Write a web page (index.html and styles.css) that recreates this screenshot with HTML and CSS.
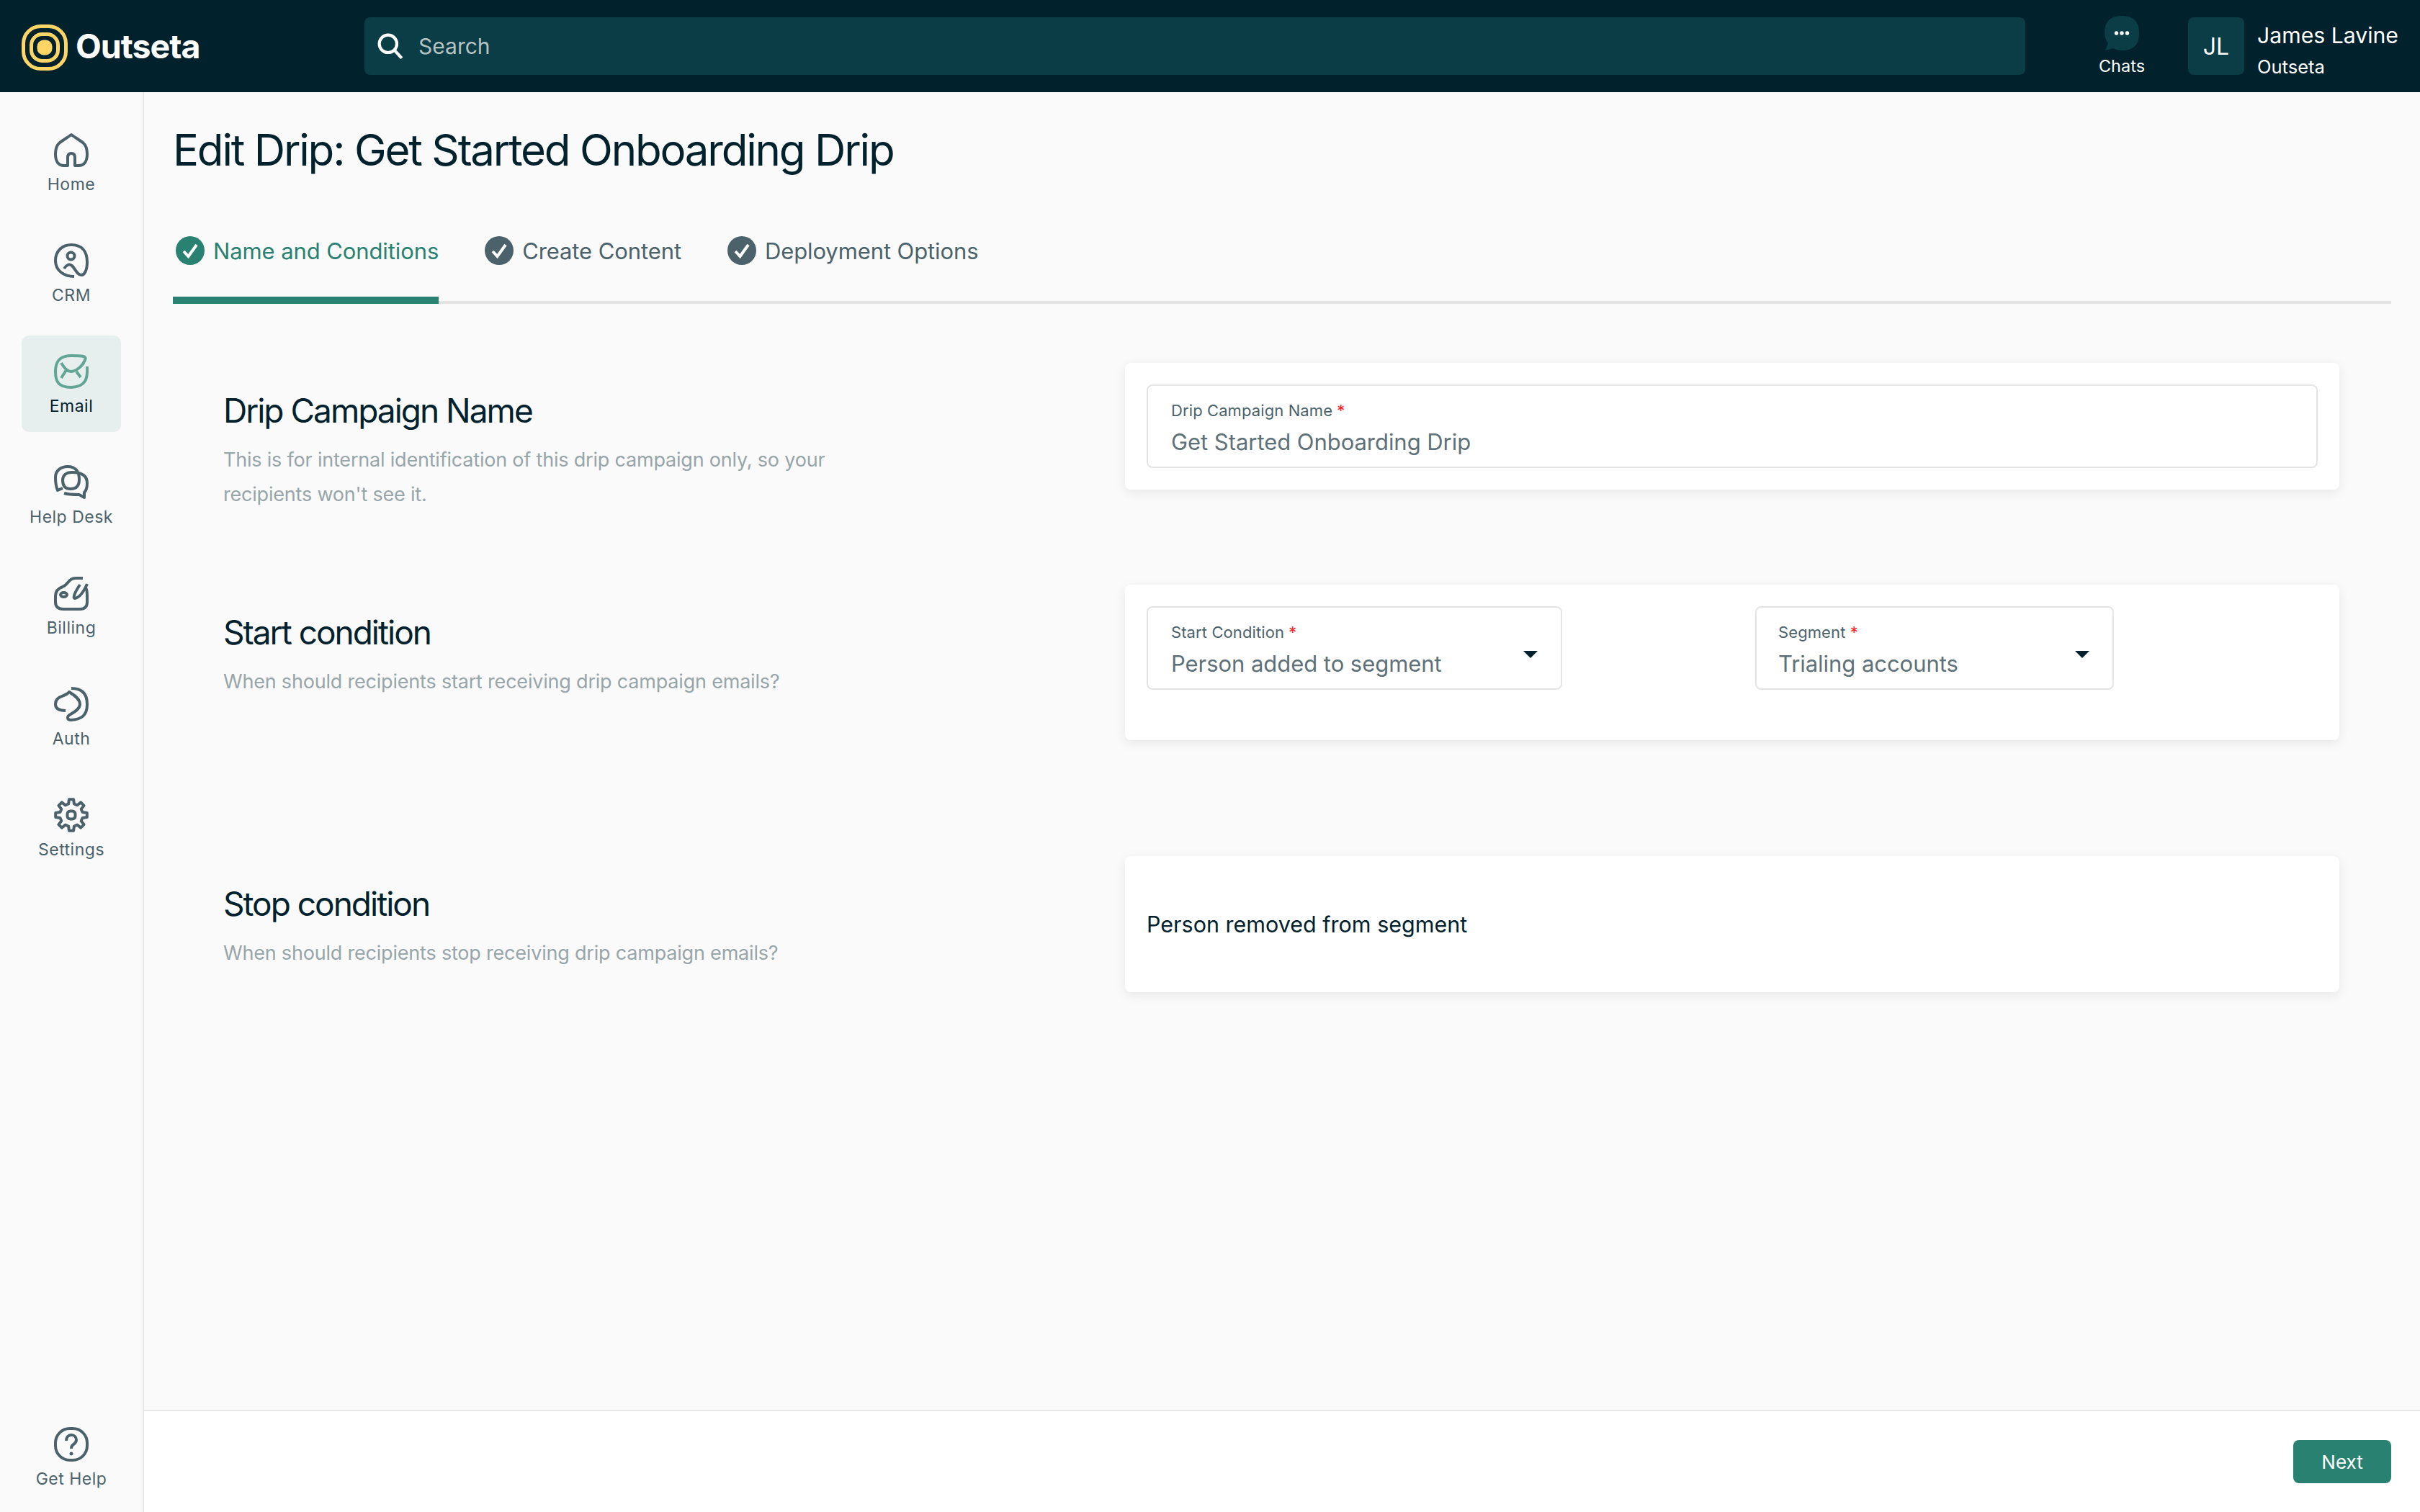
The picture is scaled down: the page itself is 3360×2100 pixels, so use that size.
FILE: index.html
```html
<!DOCTYPE html>
<html lang="en">
  <head>
    <meta charset="utf-8" />
    <title>Edit Drip: Get Started Onboarding Drip</title>
    <link rel="stylesheet" href="styles.css">
  </head>

  <body>
    <header class="topbar">
      <div class="brand">
        <svg class="brand-mark" viewBox="0 0 64 64">
          <rect class="ring-outer" x="2.5" y="2.5" width="59" height="59" rx="24" />
          <rect class="ring-inner" x="13.5" y="13.5" width="37" height="37" rx="15" />
          <rect class="ring-core" x="21.5" y="21.5" width="21" height="21" rx="9" />
        </svg>
        <span class="brand-name">Outseta</span>
      </div>
      <div class="search">
        <svg class="search-icon" viewBox="0 0 34 34">
          <circle cx="14" cy="14" r="11.5" />
          <path d="M22.5 22.5 L32 33" />
        </svg>
        <span class="search-text">Search</span>
      </div>
      <div class="chats">
        <svg class="chats-icon" viewBox="0 0 48 48">
          <path class="chats-bubble" d="M24 0 C40 0 48 8 48 24 C48 40 40 48 24 48 C19 48 15 47 12 45 L1 48 L5 38 C2 34 0 29 0 24 C0 8 8 0 24 0Z" />
          <circle class="chats-dot" cx="16.500" cy="24" r="2.700" />
          <circle class="chats-dot" cx="24" cy="24" r="2.700" />
          <circle class="chats-dot" cx="31.500" cy="24" r="2.700" />
        </svg>
        <span class="chats-label">Chats</span>
      </div>
      <div class="account">
        <div class="avatar">JL</div>
        <div class="account-text">
          <div class="account-name">James Lavine</div>
          <div class="account-org">Outseta</div>
        </div>
      </div>
    </header>

    <div class="shell">
      <nav class="sidebar">
        <div class="nav-list">
          <a class="nav-item">
            <svg class="nav-icon" viewBox="0 0 48 48">
              <path d="M24 3 C28 6 33 9 40 14 C45 18 46 23 46 30 C46 40 42 46 34 46 H29 V35 C29 31 27 29 24 29 C21 29 19 31 19 35 V46 H14 C6 46 2 40 2 30 C2 23 3 18 8 14 C15 9 20 6 24 3Z" />
            </svg>
            <span class="nav-label">Home</span>
          </a>
          <a class="nav-item">
            <svg class="nav-icon" viewBox="0 0 48 48">
              <path d="M28 46 C14 46 2 38 2 24 C2 10 12 2 24 2 C38 2 46 10 46 26 C46 38 42 44 38 44 C32 44 30 36 25 31 C21 28 17 30 14 35" />
              <circle cx="23.5" cy="17.5" r="5" />
            </svg>
            <span class="nav-label">CRM</span>
          </a>
          <a class="nav-item active">
            <svg class="nav-icon" viewBox="0 0 48 48">
              <path d="M46 17 C47 34 44 45 24 46 C6 46 2 38 2 24 C2 8 10 2 24 2 C38 2 46 2 43 8 C41 14 33 23 24 24 C19 24 14 19 10 12 M17 22 L10 33 M31 24 L37 32" />
            </svg>
            <span class="nav-label">Email</span>
          </a>
          <a class="nav-item">
            <svg class="nav-icon" viewBox="0 0 48 48">
              <path d="M12 32 L5 35 C2 28 2 22 2 17 C2 8 9 2 19 2 C30 2 35 9 35 20 C35 29 31 33 23 33 C15 33 12 28 12 21 C12 14 17 10 25 10 C38 10 46 14 46 25 C46 31 45 35 42 38 L42 45 L35 41 C27 41 20 41 14 39" />
            </svg>
            <span class="nav-label">Help Desk</span>
          </a>
          <a class="nav-item">
            <svg class="nav-icon" viewBox="0 0 48 48">
              <path d="M40 3 H30 C20 3 20 12 12 15 C6 17 2 21 2 28 V36 C2 43 6 46 13 46 H36 C42 46 46 43 46 36 V26 C46 21 45 18 44 16" />
              <path d="M46 11 C42 20 36 30 29 31 C26 31 28 24 36 12" />
              <ellipse cx="13.5" cy="26" rx="4.5" ry="3" />
            </svg>
            <span class="nav-label">Billing</span>
          </a>
          <a class="nav-item">
            <svg class="nav-icon" viewBox="0 0 48 48">
              <path d="M24 2 C38 2 46 9 46 24 C46 40 38 45 24 46 C18 46 17 41 23 38 C30 34 36 30 36 24 C36 17 29 12 21 7 C16 14 2 12 2 24 C2 31 8 33 16 33" />
            </svg>
            <span class="nav-label">Auth</span>
          </a>
          <a class="nav-item">
            <svg class="nav-icon" viewBox="0 0 48 48">
              <path d="M20.1 8.5 L20.9 2.2 H27.1 L27.9 8.5 L32.2 10.3 L37.2 6.4 L41.6 10.8 L37.7 15.8 L39.5 20.1 L45.8 20.9 V27.1 L39.5 27.9 L37.7 32.2 L41.6 37.2 L37.2 41.6 L32.2 37.7 L27.9 39.5 L27.1 45.8 H20.9 L20.1 39.5 L15.8 37.7 L10.8 41.6 L6.4 37.2 L10.3 32.2 L8.5 27.9 L2.2 27.1 V20.9 L8.5 20.1 L10.3 15.8 L6.4 10.8 L10.8 6.4 L15.8 10.3Z" />
              <rect x="18.5" y="18.5" width="11" height="11" rx="4" />
            </svg>
            <span class="nav-label">Settings</span>
          </a>
        </div>
        <a class="nav-item">
          <svg class="nav-icon" viewBox="0 0 48 48">
            <rect x="2" y="2" width="44" height="44" rx="20" />
            <path d="M17 19 C17 14 20 11 24 11 C28 11 31 14 31 18 C31 22 28 23 26 25 C24.500 26 24 28 24 30" />
            <circle class="nav-icon-dot" cx="24" cy="37" r="2.500" />
          </svg>
          <span class="nav-label">Get Help</span>
        </a>
      </nav>

      <div class="content">
        <main class="page">
          <h1 class="page-title">Edit Drip: Get Started Onboarding Drip</h1>

          <div class="tabs">
            <div class="tab active">
              <svg class="tab-check" viewBox="0 0 40 40">
                <circle cx="20" cy="20" r="20" />
                <path d="M11 21 L17.500 28 L29 12" />
              </svg>
              <span>Name and Conditions</span>
            </div>
            <div class="tab">
              <svg class="tab-check" viewBox="0 0 40 40">
                <circle cx="20" cy="20" r="20" />
                <path d="M11 21 L17.500 28 L29 12" />
              </svg>
              <span>Create Content</span>
            </div>
            <div class="tab">
              <svg class="tab-check" viewBox="0 0 40 40">
                <circle cx="20" cy="20" r="20" />
                <path d="M11 21 L17.500 28 L29 12" />
              </svg>
              <span>Deployment Options</span>
            </div>
          </div>

          <section class="form-row">
            <div class="form-intro">
              <h2 class="form-heading">Drip Campaign Name</h2>
              <p class="form-desc">This is for internal identification of this drip campaign only, so your recipients won't see it.</p>
            </div>
            <div class="card">
              <div class="field">
                <div class="field-label">Drip Campaign Name <span class="required">*</span></div>
                <div class="field-value">Get Started Onboarding Drip</div>
              </div>
            </div>
          </section>

          <section class="form-row form-row-start">
            <div class="form-intro">
              <h2 class="form-heading">Start condition</h2>
              <p class="form-desc">When should recipients start receiving drip campaign emails?</p>
            </div>
            <div class="card card-selects">
              <div class="field field-select field-condition">
                <div class="field-label">Start Condition <span class="required">*</span></div>
                <div class="field-value">Person added to segment</div>
                <span class="caret"></span>
              </div>
              <div class="field field-select field-segment">
                <div class="field-label">Segment <span class="required">*</span></div>
                <div class="field-value">Trialing accounts</div>
                <span class="caret"></span>
              </div>
            </div>
          </section>

          <section class="form-row">
            <div class="form-intro">
              <h2 class="form-heading">Stop condition</h2>
              <p class="form-desc">When should recipients stop receiving drip campaign emails?</p>
            </div>
            <div class="card card-static">Person removed from segment</div>
          </section>
        </main>

        <footer class="footer">
          <button class="btn-next">Next</button>
        </footer>
      </div>
    </div>
  </body>
</html>
```

FILE: styles.css
```css
* {
  box-sizing: border-box;
}

html,
body {
  height: 100%;
  margin: 0;
}

body {
  display: flex;
  flex-direction: column;
  font-family: Inter, "Liberation Sans", sans-serif;
  color: #01222d;
  background: #fafafa;
}

.topbar {
  display: flex;
  align-items: center;
  flex: 0 0 128px;
  padding-left: 30px;
  background: #01222d;
}

.brand {
  display: flex;
  align-items: center;
  width: 476px;
}

.brand-mark {
  width: 64px;
  height: 64px;
  margin: 3px 11px 0 0;
}

.ring-outer,
.ring-inner {
  fill: none;
  stroke: #ffd566;
  stroke-width: 5;
}

.ring-core {
  fill: #ffd566;
}

.brand-name {
  font-size: 46.5px;
  font-weight: 700;
  letter-spacing: -1px;
  color: #fff;
}

.search {
  display: flex;
  align-items: center;
  width: 2306px;
  height: 80px;
  padding-left: 18px;
  background: #0a3d45;
  border-radius: 8px;
}

.search-icon {
  width: 36px;
  height: 36px;
  margin-right: 21px;
  fill: none;
  stroke: #fff;
  stroke-width: 4;
}

.search-text {
  font-size: 30px;
  color: #b5c3c5;
}

.chats {
  display: flex;
  flex-direction: column;
  align-items: center;
  width: 64px;
  margin-left: 102px;
}

.chats-icon {
  width: 48px;
  height: 48px;
}

.chats-bubble {
  fill: #0a3d45;
}

.chats-dot {
  fill: #fff;
}

.chats-label {
  margin-top: 7px;
  font-size: 23.5px;
  color: #fff;
}

.account {
  display: flex;
  align-items: center;
  margin-left: 60px;
}

.avatar {
  display: flex;
  align-items: center;
  justify-content: center;
  width: 78px;
  height: 80px;
  font-size: 32px;
  color: #fff;
  background: #0a3d45;
  border-radius: 8px;
}

.account-text {
  margin: 14px 0 0 18px;
  color: #fff;
  white-space: nowrap;
}

.account-name {
  font-size: 30.2px;
  line-height: 44px;
}

.account-org {
  font-size: 25.5px;
  line-height: 44px;
}

.shell {
  display: flex;
  flex: 1;
  min-height: 0;
}

.sidebar {
  display: flex;
  flex-direction: column;
  justify-content: space-between;
  flex: 0 0 200px;
  padding: 30px 30px 10px 30px;
  background: #fafafa;
  border-right: 2px solid #e6e6e6;
}

.nav-list {
  display: flex;
  flex-direction: column;
  gap: 20px;
}

.nav-item {
  display: flex;
  flex-direction: column;
  align-items: center;
  width: 138px;
  height: 134px;
  padding-top: 26px;
  border-radius: 10px;
}

.nav-item.active {
  background: #e7efee;
}

.nav-icon {
  width: 48px;
  height: 48px;
  fill: none;
  stroke: #4b626a;
  stroke-width: 4;
  stroke-linecap: butt;
  stroke-linejoin: round;
}

.nav-icon-dot {
  fill: #4b626a;
  stroke: none;
}

.nav-label {
  margin-top: 9px;
  font-size: 23px;
  line-height: 30px;
  letter-spacing: 0.5px;
  color: #4b626a;
  white-space: nowrap;
}

.nav-item.active .nav-icon {
  stroke: #62a595;
}

.nav-item.active .nav-label {
  color: #01222d;
}

.content {
  display: flex;
  flex: 1;
  flex-direction: column;
  min-width: 0;
}

.page {
  flex: 1;
  padding: 0 40px;
}

.page-title {
  margin: 0;
  padding-top: 44px;
  font-size: 60px;
  font-weight: 400;
  line-height: 72px;
  letter-spacing: -2.2px;
}

.tabs {
  display: flex;
  gap: 60px;
  height: 178px;
  padding-top: 84px;
  border-bottom: 4px solid #e2e2e2;
}

.tab {
  display: flex;
  align-items: flex-start;
  height: 94px;
  padding-left: 4px;
  font-size: 31px;
  line-height: 42px;
  letter-spacing: -0.1px;
  color: #4b626a;
}

.tab-check {
  width: 40px;
  height: 40px;
  margin-right: 12px;
}

.tab-check circle {
  fill: #4b626a;
}

.tab-check path {
  fill: none;
  stroke: #fff;
  stroke-width: 4;
}

.tab.active {
  color: #298271;
  border-bottom: 10px solid #298271;
}

.tab.active .tab-check circle {
  fill: #298271;
}

.form-row {
  display: flex;
  align-items: flex-start;
  margin-bottom: 101px;
  padding: 0 72px 0 70px;
}

.tabs + .form-row {
  margin-top: 82px;
}

.form-row-start {
  margin-bottom: 161px;
}

.form-intro {
  flex: 0 0 1252px;
  padding-top: 36px;
}

.form-heading {
  margin: 0;
  font-size: 46px;
  font-weight: 400;
  line-height: 60px;
  letter-spacing: -2px;
}

.form-desc {
  width: 880px;
  margin: 15px 0 0;
  font-size: 27px;
  line-height: 48px;
  letter-spacing: -0.2px;
  color: #98a5a9;
}

.card {
  flex: 1;
  padding: 30px;
  background: #fff;
  border-radius: 8px;
  box-shadow: 0 4px 16px rgb(0 0 0 / 8%);
}

.card-selects {
  display: grid;
  grid-template-columns: 845px 1fr;
  padding-bottom: 70px;
}

.card-static {
  display: flex;
  align-items: center;
  height: 189px;
  font-size: 30.5px;
}

.field {
  position: relative;
  height: 116px;
  padding: 20px 32px;
  border: 2px solid #e4e4e4;
  border-radius: 8px;
}

.field-condition {
  width: 577px;
}

.field-segment {
  width: 498px;
  padding-left: 30px;
}

.field-label {
  font-size: 22px;
  line-height: 28px;
  letter-spacing: 0.1px;
  color: #4b626a;
}

.required {
  color: #f22;
}

.field-value {
  margin-top: 8px;
  font-size: 31px;
  line-height: 44px;
  letter-spacing: -0.05px;
  color: #5f7178;
}

.caret {
  position: absolute;
  top: 60px;
  right: 32px;
  width: 0;
  height: 0;
  border-top: 10px solid #01222d;
  border-right: 10px solid transparent;
  border-left: 10px solid transparent;
}

.footer {
  display: flex;
  align-items: center;
  justify-content: flex-end;
  flex: 0 0 142px;
  padding: 0 40px 0 0;
  background: #fff;
  border-top: 2px solid #e6e6e6;
}

.btn-next {
  width: 136px;
  height: 60px;
  font-family: inherit;
  font-size: 26px;
  color: #fff;
  background: #298271;
  border: 0;
  border-radius: 8px;
}
```
